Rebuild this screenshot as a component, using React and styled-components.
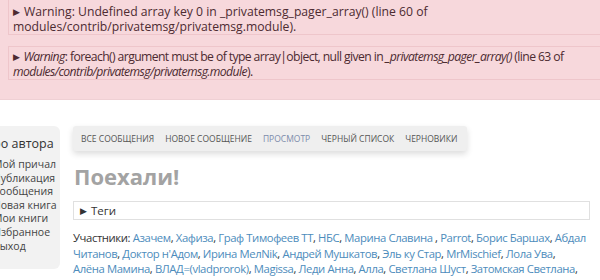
import React from "react";
import styled, { createGlobalStyle } from "styled-components";

const GlobalStyle = createGlobalStyle`
  html, body {
    margin: 0;
    padding: 0;
    background: #fff;
    overflow: hidden;
    font-family: "Open Sans", "Noto Sans", sans-serif;
  }
`;

const Messages = styled.div`
  background: #f7d8dc;
  padding: 0 0 0 8px;
  height: 100px;
  box-sizing: border-box;
  border-bottom: 1px solid #efd0d4;
  overflow: hidden;
`;

const Warning = styled.div`
  border: 1px solid #eec6cb;
  width: 640px;
  margin: ${(p) => (p.first ? "-1px 0 11px 0" : "0")};
  padding: ${(p) => (p.first ? "4px 4px 0" : "2px 4px 0")};
  color: #4d2b31;
  font-size: 12.2px;
  letter-spacing: ${(p) => (p.first ? "0" : "-0.6px")};
  line-height: 15px;
  white-space: nowrap;
`;

const Arrow = styled.span`
  font-size: 9px;
  margin-right: 4px;
  vertical-align: 1px;
`;

const Main = styled.div`
  display: flex;
  align-items: flex-start;
  padding-top: 26px;
`;

const Sidebar = styled.aside`
  margin-left: -30px;
  width: 90px;
  flex-shrink: 0;
  background: #f2f2f2;
  border-radius: 0 6px 6px 0;
  padding: 9px 0 16px;
  box-sizing: border-box;
`;

const SideTitle = styled.div`
  font-size: 12.5px;
  line-height: 18px;
  padding-left: 14px;
  margin-bottom: 5px;
  white-space: nowrap;
  color: #333;
`;

const SideItem = styled.div`
  font-size: 10.5px;
  line-height: 13.6px;
  padding-left: 23px;
  white-space: nowrap;
  color: #444;
`;

const Content = styled.div`
  margin-left: 13px;
  flex: 1;
  padding-right: 10px;
`;

const Tabs = styled.nav`
  display: flex;
  gap: 11px;
  width: 394px;
  box-sizing: border-box;
  padding: 6px 8px 6px;
  background: #efefef;
  border-radius: 3px;
  box-shadow: 0 3px 6px rgba(0, 0, 0, 0.14);
`;

const Tab = styled.span`
  font-size: 8.5px;
  line-height: 13px;
  text-transform: uppercase;
  white-space: nowrap;
  color: ${(p) => (p.active ? "#7c8cab" : "#555")};
`;

const Heading = styled.h1`
  margin: 10px 0 10px 1px;
  font-size: 22px;
  line-height: 30px;
  font-weight: 700;
  color: #a3a3a3;
`;

const Tags = styled.div`
  border: 1px solid #e0e0e0;
  padding: 0 6px;
  font-size: 11.5px;
  line-height: 17px;
  color: #333;
  margin-bottom: 10px;
`;

const Participants = styled.p`
  margin: 0;
  font-size: 11.3px;
  letter-spacing: -0.4px;
  line-height: 15.5px;
  color: #333;
`;

const Member = styled.a`
  color: #4d8cbc;
  text-decoration: none;
  white-space: ${(p) => (p.$wrap ? "normal" : "nowrap")};
`;

const names = [
  "Азачем", "Хафиза", "Граф Тимофеев ТТ", "НБС", "Марина Славина ", "Parrot",
  "Борис Баршах", "Абдал Читанов", "Доктор н'Адом", "Ирина МелNik",
  "Андрей Мушкатов", "Эль ку Стар", "MrMischief", "Лола Ува", "Алёна Мамина",
  "ВЛАД=(vladprorok)", "Magissa", "Леди Анна", "Алла", "Светлана Шуст",
  "Затомская Светлана", "Дядя Вова Гнедых", "тотеню", "Дмитрий Шаронов",
  "Конкурсы на Графской", "Екатерина Рафальская", "Ольга Гусева", "Сергей Грей",
];

const menu = ["Мой причал", "Публикация", "Сообщения", "Новая книга", "Мои книги", "Избранное", "Выход"];
const tabs = ["Все сообщения", "Новое сообщение", "Просмотр", "Черный список", "Черновики"];

export default function App() {
  return (
    <>
      <GlobalStyle />
      <Messages>
        <Warning first>
          <Arrow>▶</Arrow>Warning: Undefined array key 0 in _privatemsg_pager_array() (line 60 of
          <br />
          modules/contrib/privatemsg/privatemsg.module).
        </Warning>
        <Warning>
          <Arrow>▶</Arrow><em>Warning</em>: foreach() argument must be of type array|object, null given in{" "}
          <em>_privatemsg_pager_array()</em> (line 63 of
          <br />
          <em>modules/contrib/privatemsg/privatemsg.module</em>).
        </Warning>
      </Messages>
      <Main>
        <Sidebar>
          <SideTitle>Про автора</SideTitle>
          {menu.map((m) => (
            <SideItem key={m}>{m}</SideItem>
          ))}
        </Sidebar>
        <Content>
          <Tabs>
            {tabs.map((t) => (
              <Tab key={t} active={t === "Просмотр"}>{t}</Tab>
            ))}
          </Tabs>
          <Heading>Поехали!</Heading>
          <Tags>
            <Arrow>▶</Arrow>Теги
          </Tags>
          <Participants>
            Участники:{" "}
            {names.map((n, i) => (
              <React.Fragment key={n}>
                <Member href="#" $wrap={n === "Абдал Читанов"}>{n}</Member>
                {i < names.length - 1 ? ", " : ""}
              </React.Fragment>
            ))}
          </Participants>
        </Content>
      </Main>
    </>
  );
}
